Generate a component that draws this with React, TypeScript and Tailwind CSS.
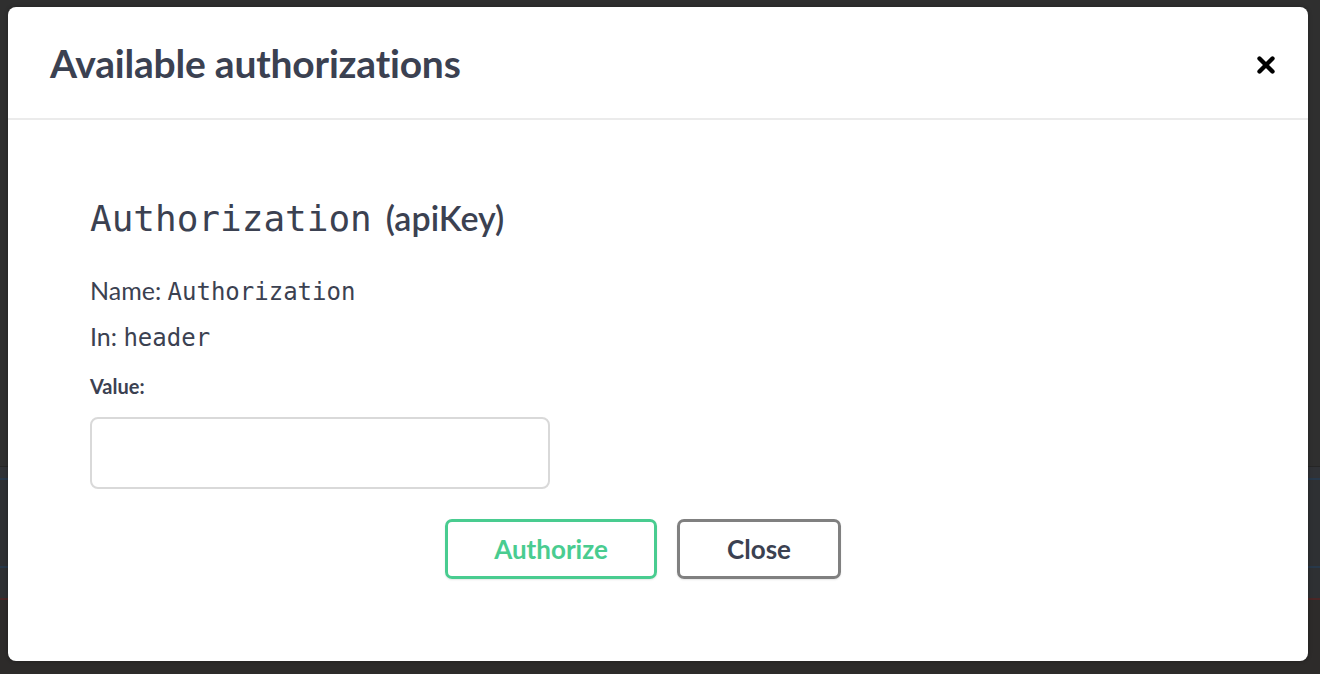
import { X } from "lucide-react";

const sans = "font-['Lato','Open_Sans',sans-serif]";
const mono = "font-['DejaVu_Sans_Mono','Liberation_Mono',monospace]";

const Backdrop = () => {
  return (
    <div className="flex flex-col w-full h-full bg-[#2f2f2f]">
      <div className="h-[466px]" />
      <div className="h-[1px] bg-[#262626]" />
      <div className="h-[11px] bg-[#303236]" />
      <div className="h-[2px] bg-[#27384a]" />
      <div className="h-[86px] bg-[#2e3033]" />
      <div className="h-[2px] bg-[#27384a]" />
      <div className="h-[30px] bg-[#2e3033]" />
      <div className="h-[2px] bg-[#4a2626]" />
      <div className="flex-1 bg-[#2d2b2a]" />
    </div>
  );
};

const App = () => {
  return (
    <div className="relative w-[1320px] h-[674px] overflow-hidden">
      <Backdrop />
      <div className="absolute left-[8px] top-[7px] w-[1300px] h-[654px] bg-white rounded-[8px] shadow-[0_0_4px_rgba(0,0,0,0.3)] flex flex-col">
        <div className="flex items-center justify-between h-[113px] pl-[42px] pr-[29px] border-b-2 border-[#ebebeb]">
          <h3 className={`${sans} text-[39px] font-bold text-[#3b4151] tracking-[-0.2px] mt-[2px]`}>
            Available authorizations
          </h3>
          <button className="flex items-center justify-center w-[26px] h-[26px] text-black mt-[4px]">
            <X size={32} strokeWidth={4} />
          </button>
        </div>
        <div className="flex flex-col px-[82px] pt-[72px]">
          <h4 className="flex items-baseline text-[#3b4151]">
            <span className={`${mono} text-[36px]`}>Authorization</span>
            <span className={`${sans} text-[34px] font-semibold ml-[14px]`}>(apiKey)</span>
          </h4>
          <div className={`${sans} text-[25px] text-[#3b4151] mt-[22px] leading-[44px]`}>
            <p>
              Name: <span className={`${mono} text-[24px]`}>Authorization</span>
            </p>
            <p>
              In: <span className={`${mono} text-[24px]`}>header</span>
            </p>
          </div>
          <label className={`${sans} text-[20px] font-bold text-[#3b4151] mt-[11px]`}>Value:</label>
          <input
            type="text"
            className="mt-[16px] w-[460px] h-[72px] border-2 border-[#d9d9d9] rounded-[8px] outline-none px-3"
          />
          <div className="flex justify-center gap-[20px] mt-[30px] pr-[30px]">
            <button
              className={`${sans} w-[212px] h-[60px] border-[3px] border-[#49cc90] rounded-[7px] text-[#49cc90] text-[26px] font-bold shadow-[0_1px_2px_rgba(0,0,0,0.1)]`}
            >
              Authorize
            </button>
            <button
              className={`${sans} w-[164px] h-[60px] border-[3px] border-[#808080] rounded-[7px] text-[#3b4151] text-[26px] font-bold shadow-[0_1px_2px_rgba(0,0,0,0.1)]`}
            >
              Close
            </button>
          </div>
        </div>
      </div>
    </div>
  );
};

export default App;
